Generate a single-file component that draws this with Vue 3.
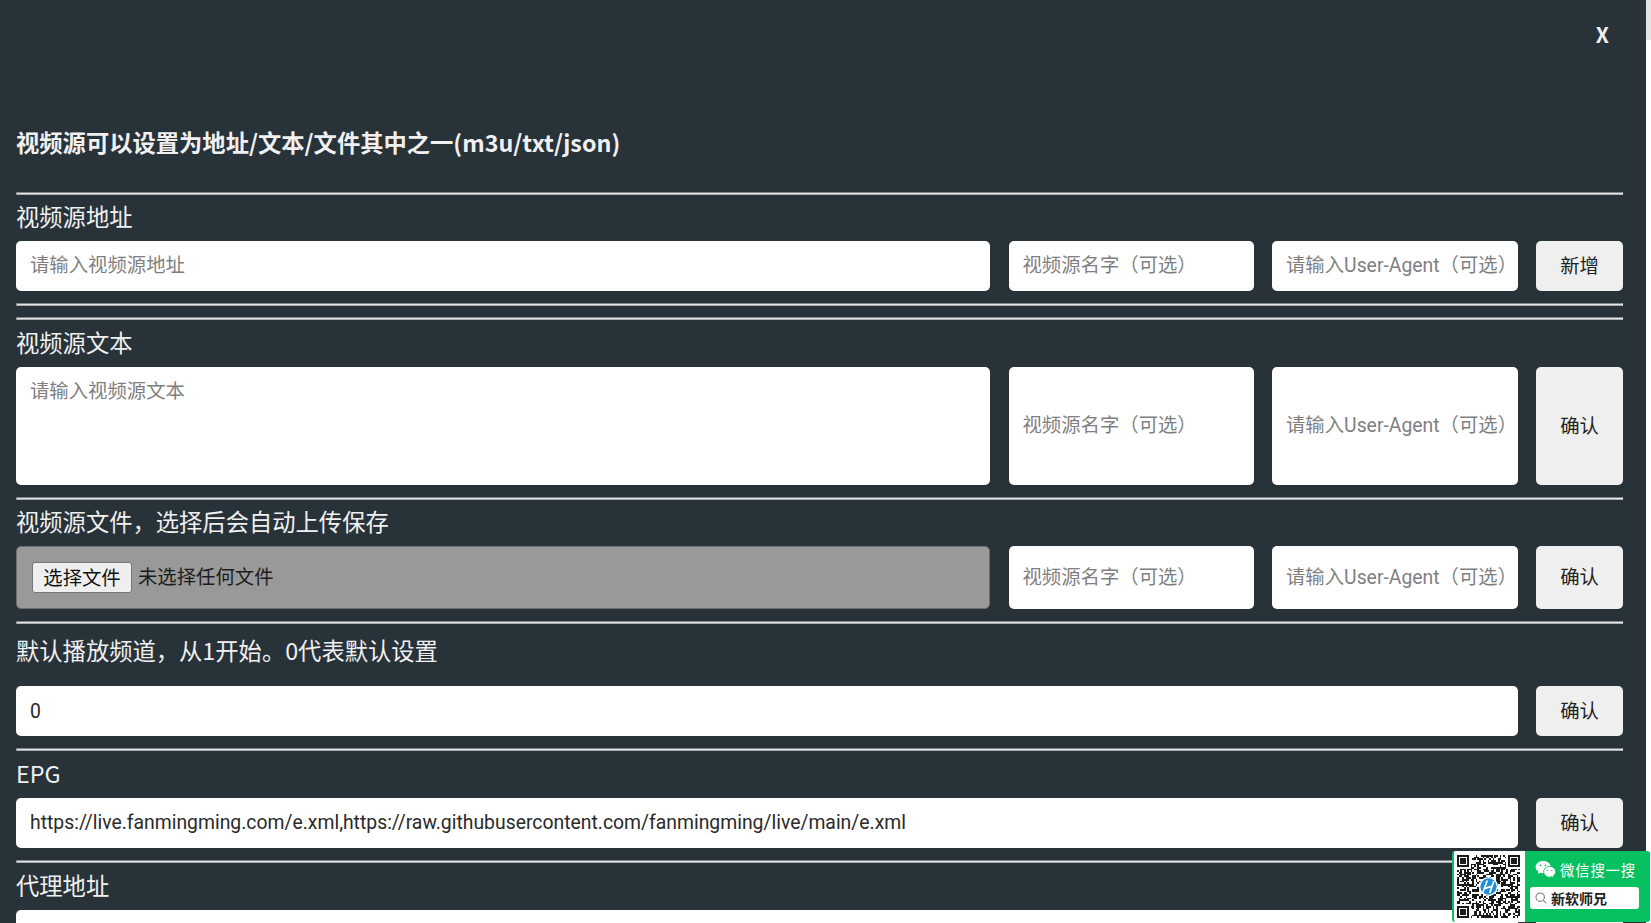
<script setup>
const SIZE = 37
function buildQr() {
  const cells = []
  let seed = 20240611
  const next = () => {
    seed = (seed * 1664525 + 1013904223) >>> 0
    return (seed >>> 16) & 1023
  }
  const inFinder = (x, y, ox, oy) => x >= ox - 1 && x <= ox + 7 && y >= oy - 1 && y <= oy + 7
  const finderAt = (x, y, ox, oy) => {
    const dx = x - ox
    const dy = y - oy
    if (dx < 0 || dx > 6 || dy < 0 || dy > 6) return false
    return dx === 0 || dx === 6 || dy === 0 || dy === 6 || (dx >= 2 && dx <= 4 && dy >= 2 && dy <= 4)
  }
  const origins = [[0, 0], [SIZE - 7, 0], [0, SIZE - 7]]
  for (let y = 0; y < SIZE; y++) {
    for (let x = 0; x < SIZE; x++) {
      const origin = origins.find(([ox, oy]) => inFinder(x, y, ox, oy))
      const on = origin ? finderAt(x, y, origin[0], origin[1]) : next() % 100 < 55
      if (on) cells.push(`M${x} ${y}h1v1h-1z`)
    }
  }
  return cells.join('')
}
const qrPath = buildQr()

const nameHint = '视频源名字（可选）'
const uaHint = '请输入User-Agent（可选）'
</script>

<template>
  <div class="screen">
    <main class="panel">
      <div class="close-row"><span class="close">X</span></div>
      <h2 class="title">视频源可以设置为地址/文本/文件其中之一(m3u/txt/json)</h2>

      <hr />
      <div class="label">视频源地址</div>
      <div class="row">
        <input class="field" placeholder="请输入视频源地址" />
        <input class="field" :placeholder="nameHint" />
        <input class="field" :placeholder="uaHint" />
        <button class="action">新增</button>
      </div>
      <hr />
      <hr class="tight" />
      <div class="label">视频源文本</div>
      <div class="row row-text">
        <textarea class="field area" placeholder="请输入视频源文本"></textarea>
        <input class="field" :placeholder="nameHint" />
        <input class="field" :placeholder="uaHint" />
        <button class="action">确认</button>
      </div>
      <hr />
      <div class="label">视频源文件，选择后会自动上传保存</div>
      <div class="row row-file">
        <div class="file-box">
          <button class="file-btn">选择文件</button>
          <span class="file-name">未选择任何文件</span>
        </div>
        <input class="field" :placeholder="nameHint" />
        <input class="field" :placeholder="uaHint" />
        <button class="action">确认</button>
      </div>
      <hr />
      <div class="label label-tall">默认播放频道，从1开始。0代表默认设置</div>
      <div class="row row-wide">
        <input class="field" value="0" />
        <button class="action">确认</button>
      </div>
      <hr />
      <div class="label">EPG</div>
      <div class="row row-wide">
        <input class="field" value="https://live.fanmingming.com/e.xml,https://raw.githubusercontent.com/fanmingming/live/main/e.xml" />
        <button class="action">确认</button>
      </div>
      <hr />
      <div class="label label-last">代理地址</div>
      <div class="row row-wide">
        <input class="field" />
        <div class="action"></div>
      </div>
    </main>

    <div class="scrollbar"><div class="thumb"></div></div>

    <aside class="promo">
      <div class="qr">
        <svg class="qr-svg" viewBox="0 0 37 37" shape-rendering="crispEdges">
          <path :d="qrPath" fill="#1a1a1a" />
          <circle cx="18.5" cy="18.5" r="5.6" fill="#fff" shape-rendering="auto" />
          <circle cx="18.5" cy="18.5" r="4.8" fill="#1d8fdc" shape-rendering="auto" />
          <path d="M17.8 15l-2.6 7M21.6 15.4l-2.4 7M16.4 19.6l4-1.2" stroke="#fff" stroke-width="1" fill="none" shape-rendering="auto" />
        </svg>
      </div>
      <div class="promo-side">
        <div class="promo-head">
          <svg class="wechat" viewBox="0 0 22 19">
            <path d="M8.2 0C3.7 0 0 3 0 6.8c0 2.2 1.2 4 3.1 5.3L2.3 14.6l2.8-1.5c1 .3 2 .5 3.1.5h.7a6 6 0 0 1-.3-1.800C8.600 8.300 12 5.500 16.200 5.500h.6C16 2.300 12.500 0 8.200 0z" fill="#fff" />
            <path d="M22 11.900c0-3.200-3.100-5.600-6.300-5.600-3.500 0-6.300 2.400-6.300 5.600s2.800 5.600 6.300 5.600c.7 0 1.500-.1 2.200-.4l2 1.200-.5-2c1.600-1.100 2.600-2.700 2.600-4.400z" fill="#fff" />
            <circle cx="5.500" cy="4.900" r="1" fill="#07c160" />
            <circle cx="10.900" cy="4.900" r="1" fill="#07c160" />
            <circle cx="13.500" cy="10.500" r=".8" fill="#07c160" />
            <circle cx="18" cy="10.500" r=".8" fill="#07c160" />
          </svg>
          <span class="promo-title">微信搜一搜</span>
        </div>
        <div class="promo-search">
          <svg class="lens" viewBox="0 0 12 12">
            <circle cx="5.200" cy="5.200" r="4.200" fill="none" stroke="#7d7d7d" stroke-width="1.100" />
            <path d="M8.300 8.300l3 3" stroke="#7d7d7d" stroke-width="1.100" />
          </svg>
          <span>新软师兄</span>
        </div>
      </div>
    </aside>
  </div>
</template>

<style>
html, body {
  margin: 0;
  height: 100%;
  overflow: hidden;
  background: #fff;
}
</style>

<style scoped>
.screen {
  position: relative;
  display: flex;
  height: 923px;
  overflow: hidden;
  font-family: Roboto, "Noto Sans CJK SC", sans-serif;
}
.panel {
  flex: 1;
  min-width: 0;
  box-sizing: border-box;
  height: 923px;
  overflow: hidden;
  padding: 0 23px 0 16px;
  background: #283239;
  color: #f0f0f0;
}
.scrollbar {
  width: 5px;
  background: #fff;
}
.thumb {
  height: 40px;
  background: #e4e4e4;
}
.close-row {
  display: flex;
  justify-content: flex-end;
  height: 70px;
  padding-right: 14px;
  padding-top: 21px;
  box-sizing: border-box;
  font-family: "Noto Sans CJK SC", sans-serif;
}
.close {
  font-size: 21px;
  line-height: 26px;
  font-weight: 700;
}
.title {
  margin: 51px 0 0;
  height: 70.600px;
  font-family: "Noto Sans CJK SC", sans-serif;
  font-size: 23.300px;
  line-height: 42px;
  font-weight: 700;
}
hr {
  box-sizing: content-box;
  height: 1px;
  margin: 0;
  background: #e4e4e4;
  border-style: solid;
  border-width: 1px;
  border-color: #7f878c #e6e6e6 #a8adb0 #7f878c;
}
.tight {
  margin-top: 11px;
}
.row + hr {
  margin-top: 12.200px;
}
.label {
  display: flex;
  align-items: center;
  box-sizing: border-box;
  height: 46.400px;
  padding-bottom: 3.600px;
  font-family: "Noto Sans CJK SC", sans-serif;
  font-size: 23.300px;
}
.label-tall {
  height: 62.400px;
  align-items: flex-start;
  padding: 9px 0 0;
}
.label-last {
  height: 47px;
}
.row {
  display: grid;
  grid-template-columns: 974px 245px 245.500px 87px;
  column-gap: 18.500px;
  height: 50px;
}
.row-text {
  height: 118px;
}
.row-file {
  height: 62.400px;
}
.row-wide {
  grid-template-columns: 1502px 87px;
  column-gap: 18px;
}
.field {
  box-sizing: border-box;
  width: 100%;
  height: 100%;
  min-width: 0;
  padding: 0 14px;
  border: none;
  border-radius: 5px;
  background: #fff;
  font: inherit;
  font-size: 19.360px;
  color: #2a2a2a;
  outline: none;
}
.field::placeholder {
  color: #7f7f7f;
}
.area {
  padding-top: 11.500px;
  resize: none;
  line-height: 28px;
}
.action {
  border: none;
  border-radius: 5px;
  background: #efefef;
  color: #222;
  font: inherit;
  font-size: 19.360px;
  padding: 0 0 2px;
}
.file-box {
  display: flex;
  align-items: center;
  gap: 6px;
  box-sizing: border-box;
  padding-left: 15px;
  border: 1px solid #6e6e6e;
  border-radius: 5px;
  background: #999;
  font-size: 19.360px;
  color: #1c1c1c;
}
.file-name {
  margin-bottom: 3px;
}
.file-btn {
  box-sizing: border-box;
  width: 100px;
  height: 31px;
  padding: 0 0 5px;
  border: 1px solid #767676;
  border-radius: 3px;
  background: #efefef;
  color: #111;
  font: inherit;
  font-size: 19.360px;
}
.promo {
  position: absolute;
  left: 1452px;
  top: 851px;
  display: flex;
  box-sizing: border-box;
  width: 198px;
  height: 71px;
  border-left: 2px solid #07c160;
  border-radius: 3px;
  background: #07c160;
  overflow: hidden;
}
.qr {
  display: flex;
  align-items: center;
  box-sizing: border-box;
  width: 71px;
  padding-left: 3px;
  background: #fff;
}
.qr-svg {
  width: 63px;
  height: 63px;
}
.promo-side {
  flex: 1;
  display: flex;
  flex-direction: column;
  padding: 7px 0 0 5px;
}
.promo-head {
  display: flex;
  align-items: center;
  gap: 4px;
  height: 22px;
  padding-left: 5px;
  color: #fff;
  font-family: "Noto Sans CJK SC", sans-serif;
}
.promo-title {
  font-size: 14.400px;
  letter-spacing: .8px;
}
.wechat {
  width: 21px;
  height: 17px;
}
.promo-search {
  display: flex;
  align-items: center;
  gap: 4px;
  box-sizing: border-box;
  width: 109px;
  height: 22px;
  margin-top: 7px;
  padding-left: 5px;
  border-radius: 3px;
  background: #fff;
  color: #222;
  font-size: 14px;
  font-weight: 700;
  font-family: "Noto Sans CJK SC", sans-serif;
}
.lens {
  width: 12px;
  height: 12px;
}
</style>
